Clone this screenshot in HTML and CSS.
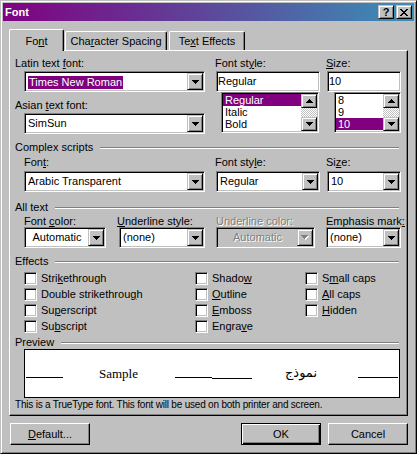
FILE: index.html
```html
<!DOCTYPE html>
<html lang="en">
<head>
<meta charset="utf-8">
<title>Font</title>
<link rel="stylesheet" href="styles.css">
</head>
<body>
<div class="window">
  <div class="titlebar">
    <span class="title">Font</span>
    <div class="caption-btns">
      <span class="cap-btn">?</span>
      <span class="cap-btn"><svg class="px" width="8" height="7" viewBox="0 0 8 7"><path d="M0 0h2v1h-2z M6 0h2v1h-2z M1 1h2v1h-2z M5 1h2v1h-2z M2 2h4v1h-4z M3 3h2v1h-2z M2 4h4v1h-4z M1 5h2v1h-2z M5 5h2v1h-2z M0 6h2v1h-2z M6 6h2v1h-2z"/></svg></span>
    </div>
  </div>

  <div class="tabs">
    <div class="tab active tab-font">Fo<u>n</u>t</div>
    <div class="tab tab-cs">Cha<u>r</u>acter Spacing</div>
    <div class="tab tab-te">Te<u>x</u>t Effects</div>
  </div>

  <div class="panel">
    <div class="row top-section">
      <div class="col-font">
        <div class="label">Latin text <u>f</u>ont:</div>
        <div class="field combo combo-font gap1">
          <div class="combo-field"><span class="sel-text">Times New Roman</span></div>
          <div class="drop raised"><svg class="px" width="7" height="4" viewBox="0 0 7 4"><path d="M0 0H7V1H6V2H5V3H4V4H3V3H2V2H1V1H0Z"/></svg></div>
        </div>
        <div class="label label-asian">Asian <u>t</u>ext font:</div>
        <div class="field combo combo-font gap1">
          <div class="combo-field">SimSun</div>
          <div class="drop raised"><svg class="px" width="7" height="4" viewBox="0 0 7 4"><path d="M0 0H7V1H6V2H5V3H4V4H3V3H2V2H1V1H0Z"/></svg></div>
        </div>
      </div>
      <div class="col-style">
        <div class="label">Font st<u>y</u>le:</div>
        <div class="field edit edit-style gap1">Regular</div>
        <div class="field listbox list-style">
          <div class="list-items">
            <div class="item selected">Regular</div>
            <div class="item">Italic</div>
            <div class="item">Bold</div>
          </div>
          <div class="vscroll">
            <div class="sb-btn raised"><svg class="px" width="7" height="4" viewBox="0 0 7 4"><path d="M3 0H4V1H5V2H6V3H7V4H0V3H1V2H2V1H3Z"/></svg></div>
            <div class="sb-track"></div>
            <div class="sb-btn raised"><svg class="px" width="7" height="4" viewBox="0 0 7 4"><path d="M0 0H7V1H6V2H5V3H4V4H3V3H2V2H1V1H0Z"/></svg></div>
          </div>
        </div>
      </div>
      <div class="col-size">
        <div class="label"><u>S</u>ize:</div>
        <div class="field edit edit-size gap1">10</div>
        <div class="field listbox list-size">
          <div class="list-items">
            <div class="item">8</div>
            <div class="item">9</div>
            <div class="item selected">10</div>
          </div>
          <div class="vscroll">
            <div class="sb-btn raised"><svg class="px" width="7" height="4" viewBox="0 0 7 4"><path d="M3 0H4V1H5V2H6V3H7V4H0V3H1V2H2V1H3Z"/></svg></div>
            <div class="sb-track"></div>
            <div class="sb-btn raised"><svg class="px" width="7" height="4" viewBox="0 0 7 4"><path d="M0 0H7V1H6V2H5V3H4V4H3V3H2V2H1V1H0Z"/></svg></div>
          </div>
        </div>
      </div>
    </div>

    <div class="group-header gh-complex"><span>Complex scripts</span><span class="etch"></span></div>
    <div class="row complex-section">
      <div class="cx-col1">
        <div class="label">Fon<u>t</u>:</div>
        <div class="field combo gap2">
          <div class="combo-field">Arabic Transparent</div>
          <div class="drop raised"><svg class="px" width="7" height="4" viewBox="0 0 7 4"><path d="M0 0H7V1H6V2H5V3H4V4H3V3H2V2H1V1H0Z"/></svg></div>
        </div>
      </div>
      <div class="cx-col2">
        <div class="label">Font sty<u>l</u>e:</div>
        <div class="field combo cx-combo2 gap2">
          <div class="combo-field">Regular</div>
          <div class="drop raised"><svg class="px" width="7" height="4" viewBox="0 0 7 4"><path d="M0 0H7V1H6V2H5V3H4V4H3V3H2V2H1V1H0Z"/></svg></div>
        </div>
      </div>
      <div class="cx-col3">
        <div class="label">Si<u>z</u>e:</div>
        <div class="field combo cx-combo3 gap2">
          <div class="combo-field">10</div>
          <div class="drop raised"><svg class="px" width="7" height="4" viewBox="0 0 7 4"><path d="M0 0H7V1H6V2H5V3H4V4H3V3H2V2H1V1H0Z"/></svg></div>
        </div>
      </div>
    </div>

    <div class="group-header gh-all"><span>All text</span><span class="etch"></span></div>
    <div class="row all-section">
      <div class="at-col1">
        <div class="label label-tight">Font <u>c</u>olor:</div>
        <div class="field combo">
          <div class="combo-field centered">Automatic</div>
          <div class="drop raised"><svg class="px" width="7" height="4" viewBox="0 0 7 4"><path d="M0 0H7V1H6V2H5V3H4V4H3V3H2V2H1V1H0Z"/></svg></div>
        </div>
      </div>
      <div class="at-col2">
        <div class="label label-tight"><u>U</u>nderline style:</div>
        <div class="field combo at-combo2">
          <div class="combo-field">(none)</div>
          <div class="drop raised"><svg class="px" width="7" height="4" viewBox="0 0 7 4"><path d="M0 0H7V1H6V2H5V3H4V4H3V3H2V2H1V1H0Z"/></svg></div>
        </div>
      </div>
      <div class="at-col3">
        <div class="label label-tight disabled">Underline color:</div>
        <div class="field combo combo-disabled">
          <div class="combo-field centered disabled">Automatic</div>
          <div class="drop raised"><svg class="px" width="8" height="5" viewBox="0 0 8 5"><path class="hl" d="M1 1H8V2H7V3H6V4H5V5H4V4H3V3H2V2H1Z"/><path class="gr" d="M0 0H7V1H6V2H5V3H4V4H3V3H2V2H1V1H0Z"/></svg></div>
        </div>
      </div>
      <div class="at-col4">
        <div class="label label-tight">Emphasis mark<u>:</u></div>
        <div class="field combo">
          <div class="combo-field">(none)</div>
          <div class="drop raised"><svg class="px" width="7" height="4" viewBox="0 0 7 4"><path d="M0 0H7V1H6V2H5V3H4V4H3V3H2V2H1V1H0Z"/></svg></div>
        </div>
      </div>
    </div>

    <div class="group-header gh-effects"><span>Effects</span><span class="etch"></span></div>
    <div class="row effects">
      <div class="fx-col fx-col1">
        <div class="check-row"><span class="checkbox"></span><span class="check-label">Stri<u>k</u>ethrough</span></div>
        <div class="check-row"><span class="checkbox"></span><span class="check-label">Double strikethrou<u>g</u>h</span></div>
        <div class="check-row"><span class="checkbox"></span><span class="check-label">Su<u>p</u>erscript</span></div>
        <div class="check-row"><span class="checkbox"></span><span class="check-label">Su<u>b</u>script</span></div>
      </div>
      <div class="fx-col fx-col2">
        <div class="check-row"><span class="checkbox"></span><span class="check-label">Shado<u>w</u></span></div>
        <div class="check-row"><span class="checkbox"></span><span class="check-label"><u>O</u>utline</span></div>
        <div class="check-row"><span class="checkbox"></span><span class="check-label"><u>E</u>mboss</span></div>
        <div class="check-row"><span class="checkbox"></span><span class="check-label">Engra<u>v</u>e</span></div>
      </div>
      <div class="fx-col fx-col3">
        <div class="check-row"><span class="checkbox"></span><span class="check-label">S<u>m</u>all caps</span></div>
        <div class="check-row"><span class="checkbox"></span><span class="check-label"><u>A</u>ll caps</span></div>
        <div class="check-row"><span class="checkbox"></span><span class="check-label"><u>H</u>idden</span></div>
      </div>
    </div>

    <div class="group-header gh-preview"><span>Preview</span><span class="etch"></span></div>
    <div class="preview-box">
      <span class="seg seg1"></span>
      <span class="sample">Sample</span>
      <span class="seg seg2a"></span>
      <span class="seg seg2b"></span>
      <span class="arabic" lang="ar" dir="rtl">نموذج</span>
      <span class="seg seg3"></span>
    </div>
    <div class="note">This is a TrueType font. This font will be used on both printer and screen.</div>
  </div>

  <div class="buttons">
    <div class="btn raised-btn"><span><u>D</u>efault...</span></div>
    <div class="btn btn-ok default-btn">OK</div>
    <div class="btn btn-cancel raised-btn">Cancel</div>
  </div>
</div>
</body>
</html>
```

FILE: styles.css
```css
* { box-sizing: border-box; }
html, body { margin: 0; padding: 0; }
body {
  background: #c0c0c0;
  font-family: "Liberation Sans", Arial, sans-serif;
  font-size: 11px;
  line-height: 13px;
  color: #000;
}
u { text-decoration: underline; text-underline-offset: 1px; }
.px { display: block; shape-rendering: crispEdges; fill: #000; }

.window {
  width: 417px;
  height: 454px;
  background: #c0c0c0;
  border: 1px solid;
  border-color: #c0c0c0 #000 #000 #c0c0c0;
  box-shadow: inset 1px 1px #fff, inset -1px -1px #808080;
  padding: 2px;
  display: flex;
  flex-direction: column;
}

/* title bar */
.titlebar {
  height: 18px;
  flex: none;
  display: flex;
  align-items: center;
  padding: 0 2px;
  background: linear-gradient(to right, #800080, #3a90b6);
  color: #fff;
}
.title { flex: 1; font-weight: bold; }
.caption-btns { display: flex; gap: 2px; }
.cap-btn {
  width: 16px;
  height: 14px;
  background: #c0c0c0;
  border: 1px solid;
  border-color: #c0c0c0 #000 #000 #c0c0c0;
  box-shadow: inset 1px 1px #fff, inset -1px -1px #808080;
  display: flex;
  align-items: center;
  justify-content: center;
  color: #000;
  font-weight: bold;
  line-height: 12px;
}

/* tabs */
.tabs {
  flex: none;
  display: flex;
  align-items: flex-end;
  height: 21px;
  margin-top: 8px;
  padding-left: 6px;
}
.tab {
  height: 19px;
  padding-top: 3px;
  background: #c0c0c0;
  border-top: 1px solid #fff;
  border-left: 1px solid #fff;
  border-right: 1px solid #000;
  box-shadow: inset -1px 0 #808080;
  border-radius: 2px 2px 0 0;
  text-align: center;
  white-space: nowrap;
}
.tab.active {
  height: 22px;
  padding-top: 5px;
  margin-bottom: -1px;
  position: relative;
  z-index: 1;
}
.tab-font { width: 55px; }
.tab-cs { width: 102px; margin-left: 1px; }
.tab-te { width: 76px; margin-left: 2px; }

/* panel */
.panel {
  flex: none;
  height: 366px;
  margin: 0 6px;
  border: 1px solid;
  border-color: #fff #000 #000 #fff;
  box-shadow: inset -1px -1px #808080;
  padding: 6px 6px 0 5px;
}
.row { display: flex; }
.label { white-space: nowrap; }
.label-tight { line-height: 11px; }
.disabled { color: #808080; text-shadow: 1px 1px 0 #fff; }
.gap1 { margin-top: 1px; }
.gap2 { margin-top: 2px; }

/* sunken fields */
.field {
  border: 1px solid;
  border-color: #808080 #fff #fff #808080;
  box-shadow: inset 1px 1px #000, inset -1px -1px #c0c0c0;
  padding: 1px;
  background: #fff;
}
.raised {
  background: #c0c0c0;
  border: 1px solid;
  border-color: #c0c0c0 #000 #000 #c0c0c0;
  box-shadow: inset 1px 1px #fff, inset -1px -1px #808080;
  display: flex;
  align-items: center;
  justify-content: center;
}
.combo { height: 21px; display: flex; }
.combo-field {
  flex: 1;
  min-width: 0;
  line-height: 17px;
  padding-left: 2px;
  white-space: nowrap;
  overflow: hidden;
}
.combo-field.centered { text-align: center; padding-left: 0; }
.combo-disabled, .combo-disabled .combo-field { background: #c0c0c0; }
.drop { width: 16px; height: 17px; flex: none; }
.drop .hl { fill: #fff; }
.drop .gr { fill: #808080; }
.sel-text {
  display: inline-block;
  background: #800080;
  color: #fff;
  line-height: 13px;
  padding: 0 1px;
  vertical-align: middle;
}
.edit { height: 21px; line-height: 17px; white-space: nowrap; }

.listbox { height: 41px; display: flex; }
.list-items { flex: 1; min-width: 0; overflow: hidden; }
.item { height: 12px; line-height: 12px; padding-left: 2px; white-space: nowrap; }
.item.selected { background: #800080; color: #fff; }
.vscroll { width: 16px; flex: none; display: flex; flex-direction: column; }
.sb-btn { height: 14px; flex: none; }
.sb-track {
  flex: 1;
  background-image: repeating-conic-gradient(#c0c0c0 0 25%, #fff 0 50%);
  background-size: 2px 2px;
}

/* top section */
.col-font { width: 190px; }
.combo-font { margin-left: 9px; width: 181px; }
.label-asian { margin-top: 7px; }
.col-style { width: 105px; margin-left: 10px; }
.edit-style { margin-left: 1px; width: 104px; }
.list-style { margin-left: 6px; width: 98px; }
.col-size { width: 75px; margin-left: 6px; }
.edit-size { margin-left: 1px; width: 74px; }
.list-size { margin-left: 8px; width: 67px; }

/* group headers */
.group-header { display: flex; align-items: center; height: 13px; white-space: nowrap; }
.etch {
  flex: 1;
  height: 2px;
  border-top: 1px solid #808080;
  border-bottom: 1px solid #fff;
  margin-left: 7px;
  margin-right: 2px;
}
.gh-complex { margin-top: 7px; }
.gh-all { margin-top: 9px; }
.gh-effects { margin-top: 7px; }
.gh-preview { margin-top: 1px; }

/* complex scripts */
.complex-section { margin-top: 2px; }
.cx-col1 { width: 181px; margin-left: 9px; }
.cx-col2 { width: 105px; margin-left: 10px; }
.cx-combo2 { margin-left: 1px; width: 104px; }
.cx-col3 { width: 75px; margin-left: 6px; }
.cx-combo3 { margin-left: 1px; width: 74px; }

/* all text */
.all-section { margin-top: 2px; }
.at-col1 { width: 82px; margin-left: 9px; }
.at-col2 { width: 88px; margin-left: 11px; }
.at-combo2 { margin-left: 2px; width: 86px; }
.at-col3 { width: 99px; margin-left: 11px; }
.at-col4 { width: 75px; margin-left: 11px; }

/* effects */
.effects { margin-top: 3px; padding-left: 9px; }
.fx-col { display: flex; flex-direction: column; }
.fx-col1 { width: 171px; }
.fx-col2 { width: 110px; }
.check-row { height: 16px; display: flex; align-items: flex-start; white-space: nowrap; }
.checkbox {
  width: 13px;
  height: 13px;
  margin-top: 1px;
  flex: none;
  border: 1px solid;
  border-color: #808080 #fff #fff #808080;
  box-shadow: inset 1px 1px #000, inset -1px -1px #c0c0c0;
  background: #fff;
}
.check-label { margin-left: 4px; line-height: 13px; margin-top: 1px; }

/* preview */
.preview-box {
  margin-left: 9px;
  width: 376px;
  height: 49px;
  border: 1px solid #000;
  background: #fff;
  display: flex;
  align-items: flex-start;
  padding-top: 16px;
}
.seg { height: 12px; border-bottom: 1px solid #000; flex: none; }
.seg1 { margin-left: 1px; width: 37px; }
.sample {
  margin-left: 36px;
  width: 38px;
  margin-top: 1px;
  font-family: "Liberation Serif", "Times New Roman", serif;
  font-size: 13px;
  line-height: 13px;
  text-align: center;
  white-space: nowrap;
}
.seg2a { margin-left: 38px; width: 37px; }
.seg2b { width: 40px; height: 13px; }
.arabic {
  margin-left: 35px;
  width: 30px;
  font-family: "DejaVu Sans", sans-serif;
  font-size: 13px;
  line-height: 13px;
  text-align: center;
  white-space: nowrap;
}
.seg3 { margin-left: 41px; width: 40px; }
.note { white-space: nowrap; font-size: 10px; letter-spacing: -0.2px; }

/* buttons */
.buttons {
  flex: none;
  display: flex;
  height: 22px;
  margin-top: 7px;
  padding: 0 6px 0 7px;
}
.btn {
  width: 80px;
  height: 22px;
  display: flex;
  align-items: center;
  justify-content: center;
  background: #c0c0c0;
}
.raised-btn {
  border: 1px solid;
  border-color: #fff #000 #000 #fff;
  box-shadow: inset -1px -1px #808080;
}
.default-btn {
  border: 1px solid #000;
  box-shadow: inset 1px 1px #fff, inset -1px -1px #000, inset -2px -2px #808080;
}
.btn-ok { margin-left: auto; }
.btn-cancel { margin-left: 7px; }
```
